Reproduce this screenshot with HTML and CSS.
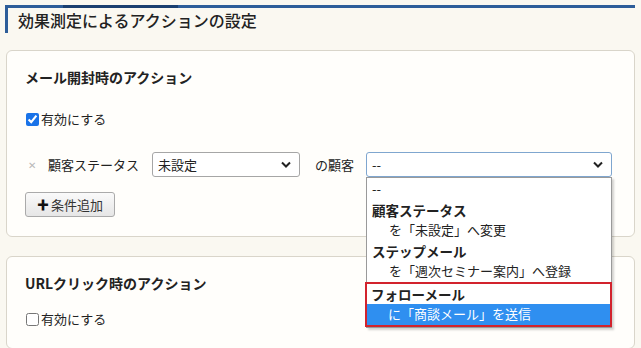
FILE: index.html
```html
<!DOCTYPE html>
<html lang="ja">
<head>
    <meta charset="UTF-8">
    <title>効果測定によるアクションの設定</title>
    <link rel="stylesheet" href="styles.css">
</head>
<body>
    <div class="page">
        <div class="topbar"><span class="seg"></span></div>
        <h1 class="title">効果測定によるアクションの設定</h1>

        <div class="box">
            <h2>メール開封時のアクション</h2>
            <label class="check"><input type="checkbox" checked>有効にする</label>
            <div class="row">
                <span class="remove">✕</span>
                <span class="label">顧客ステータス</span>
                <div class="select small"><span>未設定</span><svg viewBox="0 0 10 6"><path d="M1 1l4 4 4-4" /></svg></div>
                <span class="of">の顧客</span>
                <div class="select wide focus">
                    <span>--</span><svg viewBox="0 0 10 6"><path d="M1 1l4 4 4-4" /></svg>
                    <div class="list">
                        <div class="opt">--</div>
                        <div class="group">顧客ステータス</div>
                        <div class="opt sub">を「未設定」へ変更</div>
                        <div class="group">ステップメール</div>
                        <div class="opt sub">を「週次セミナー案内」へ登録</div>
                        <div class="mark">
                            <div class="group">フォローメール</div>
                            <div class="opt sub selected">に「商談メール」を送信</div>
                        </div>
                    </div>
                </div>
            </div>
            <button class="add"><b>✚</b>条件追加</button>
        </div>

        <div class="box last">
            <h2>URLクリック時のアクション</h2>
            <label class="check"><input type="checkbox">有効にする</label>
        </div>
    </div>
</body>
</html>
```

FILE: styles.css
```css
*{
    margin: 0;
    padding: 0;
    box-sizing: border-box;
    font-family: "Noto Sans CJK JP", "Noto Sans", sans-serif;
}
body{
    background: #faf8f1;
    color: #222;
    height: 348px;
    overflow: hidden;
}
.page{
    padding: 5px 6px 0 5px;
}
.topbar{
    height: 3px;
    background: #2d5d99;
    position: relative;
}
.topbar .seg{
    position: absolute;
    left: 58px;
    width: 115px;
    height: 3px;
    background: #1a3f70;
}
.title{
    font-size: 16px;
    font-weight: 500;
    line-height: 25px;
    border-left: 3px solid #2d5d99;
    padding-left: 10px;
    margin-bottom: 17px;
    color: #222;
}
.box{
    margin-left: 1px;
    background: #fffefb;
    border: 1px solid #d9d5ca;
    border-radius: 6px;
    padding: 16px 18px 19px;
    margin-bottom: 19px;
}
.box h2{
    font-size: 14px;
    font-weight: 700;
    line-height: 20px;
    color: #222;
}
.check{
    display: flex;
    align-items: center;
    font-size: 13px;
    line-height: 20px;
    margin-top: 22px;
}
.last .check{
    margin-top: 16px;
}
.check input{
    width: 13px;
    height: 13px;
    margin: 0 2px 0 1px;
    accent-color: #1a73e8;
}
.row{
    display: flex;
    align-items: center;
    margin-top: 23px;
    font-size: 13px;
}
.remove{
    color: #b8b8b8;
    font-size: 10px;
    width: 23px;
    padding-left: 3px;
}
.label{
    width: 104px;
}
.of{
    margin: 0 12px 0 15px;
}
.select{
    position: relative;
    height: 25px;
    border: 1px solid #a6a6a6;
    border-radius: 3px;
    background: #fff;
    display: flex;
    align-items: center;
    justify-content: space-between;
    padding: 0 8px 0 5px;
}
.select svg{
    width: 10px;
    height: 7px;
    fill: none;
    stroke: #222;
    stroke-width: 2;
}
.small{
    width: 148px;
}
.wide{
    width: 246px;
}
.focus{
    border-color: #7fa6cf;
}
.list{
    position: absolute;
    top: 24px;
    left: -1px;
    width: 246px;
    background: #fff;
    border: 1px solid #9a9a9a;
    box-shadow: 2px 2px 2px rgba(0,0,0,0.18);
    padding-top: 1px;
    z-index: 2;
}
.opt, .group{
    line-height: 20.5px;
    padding-left: 5px;
    white-space: nowrap;
}
.group{
    font-weight: 700;
    font-size: 13.5px;
}
.sub{
    padding-left: 22px;
}
.mark{
    border: 2px solid #d2232d;
    margin: 0 -1px 0 -2px;
}
.mark .group{
    padding-left: 4px;
}
.mark .sub{
    padding-left: 21px;
}
.selected{
    background: #2f8ff0;
    color: #fff;
}
.add{
    margin-top: 15px;
    height: 25px;
    width: 90px;
    border: 1px solid #aaa;
    border-radius: 3px;
    background: linear-gradient(#fafafa, #e6e6e6);
    font-size: 13px;
    color: #333;
    display: flex;
    align-items: center;
    justify-content: center;
    gap: 2px;
}
.add b{
    color: #111;
    font-size: 12px;
}
```
